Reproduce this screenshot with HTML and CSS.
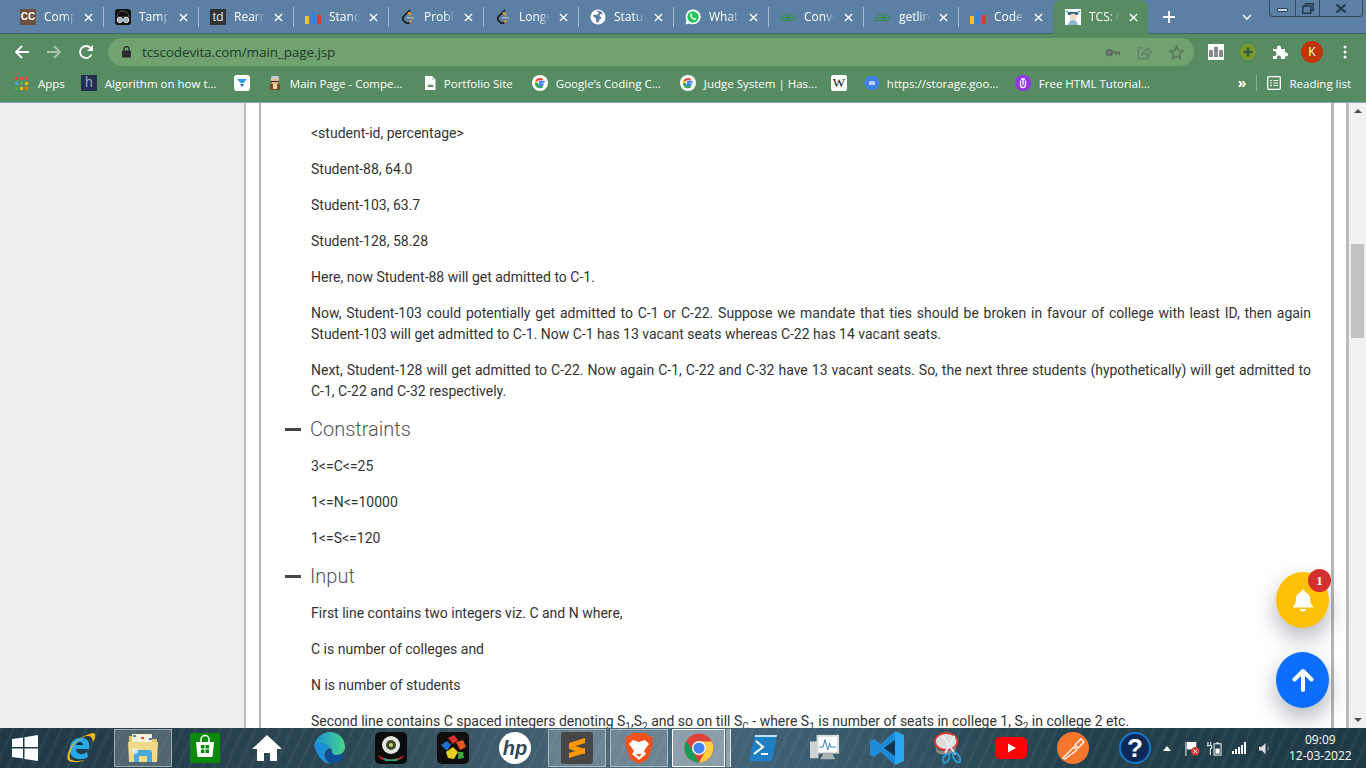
FILE: index.html
```html
<!DOCTYPE html>
<html lang="en">
<head>
	<meta charset="UTF-8">
	<title>TCS: CodeVita</title>
	<link rel="stylesheet" href="styles.css">
</head>
<body>
<svg class="defs" width="0" height="0">
	<defs>
		<linearGradient id="edge_dome" x1="0" y1="0" x2="1" y2="0"><stop offset="0" stop-color="#1b8fd8"/><stop offset="1" stop-color="#45d68a"/></linearGradient>
	</defs>
	<symbol id="x" viewBox="0 0 10 10"><path d="M1 1l8 8M9 1l-8 8" stroke="#fff" stroke-width="1.5" fill="none"/></symbol>
	<symbol id="bars" viewBox="0 0 16 16"><rect x="0" y="7" width="4" height="8" fill="#f6c02c"/><rect x="6" y="2" width="4" height="13" rx="1" fill="#3f7fd0"/><rect x="12" y="6" width="4" height="9" fill="#d23f31"/></symbol>
	<symbol id="leet" viewBox="0 0 16 16"><path d="M10 1L3.500 7.500Q2 9.500 3.500 11.500L5.500 13.500Q7.500 15 9.500 13.500" stroke="#1c1c1c" stroke-width="1.700" fill="none"/><path d="M9.500 13.500L11.500 11.500M8 3.500L11 6" stroke="#f0a020" stroke-width="1.700" fill="none"/><path d="M7 8.700h7" stroke="#b0b0b0" stroke-width="1.500"/></symbol>
	<symbol id="gfg" viewBox="0 0 16 16"><path d="M0 8.500h16M2 5.500Q7 4.500 8 8.500Q7 12 3.500 11.500Q1 11 1 8.500M14 5.500Q9 4.500 8 8.500Q9 12 12.500 11.500Q15 11 15 8.500" stroke="#2f8d46" stroke-width="1.100" fill="none"/></symbol>
	<symbol id="g" viewBox="0 0 16 16"><circle cx="8" cy="8" r="8" fill="#fff"/><path d="M12.700 6.800H8v2.400h2.700Q10.200 11 8 11Q5.200 10.800 5 8" fill="none" stroke="#4285f4" stroke-width="2"/><path d="M5 8Q5 9.700 6.200 10.500L4.500 12.200Q2.800 10.500 2.800 8z" fill="#34a853"/><path d="M4.500 12.200L6.200 10.500Q8 11.600 10 10.500L11.500 12Q8 14.500 4.500 12.200z" fill="#34a853"/><path d="M2.800 8Q2.800 6.500 3.600 5.300L5.500 6.700Q5 7.300 5 8z" fill="#fbbc05"/><path d="M3.600 5.300Q5 3 8 3Q10 3 11.300 4.200L9.700 5.700Q7 4 5.500 6.700z" fill="#ea4335"/></symbol>
</svg>

<div class="tabstrip">
	<div class="tab"><span class="fav fav_cc">CC</span><span class="tab_title">Comp</span><svg class="tab_x"><use href="#x"/></svg></div>
	<div class="tab"><svg class="fav" viewBox="0 0 16 16"><rect width="16" height="16" rx="3" fill="#111"/><path d="M2 8Q3 2 8 2Q13 2 14 8z" fill="#111" stroke="#555"/><circle cx="4.800" cy="11" r="2.700" fill="#9fb2bf" stroke="#ddd"/><circle cx="11.200" cy="11" r="2.700" fill="#9fb2bf" stroke="#ddd"/></svg><span class="tab_title">Tamp</span><svg class="tab_x"><use href="#x"/></svg></div>
	<div class="tab"><span class="fav fav_td">td</span><span class="tab_title">Rearr</span><svg class="tab_x"><use href="#x"/></svg></div>
	<div class="tab"><svg class="fav"><use href="#bars"/></svg><span class="tab_title">Stand</span><svg class="tab_x"><use href="#x"/></svg></div>
	<div class="tab"><svg class="fav"><use href="#leet"/></svg><span class="tab_title">Proble</span><svg class="tab_x"><use href="#x"/></svg></div>
	<div class="tab"><svg class="fav"><use href="#leet"/></svg><span class="tab_title">Longe</span><svg class="tab_x"><use href="#x"/></svg></div>
	<div class="tab"><svg class="fav" viewBox="0 0 16 16"><circle cx="8" cy="8" r="7.500" fill="#fff"/><path d="M6 1.500L9 4 7 6 4 5.500 3 7 6 9.500 6 12 8 14 9.500 10.500 12 9 9.500 7 10.500 5 13 5.500 11.500 2.500z" fill="#5b80a3"/></svg><span class="tab_title">Status</span><svg class="tab_x"><use href="#x"/></svg></div>
	<div class="tab"><svg class="fav" viewBox="0 0 16 16"><path d="M0.500 15.500L1.600 11.500A7.500 7.500 0 1 1 4.500 14.400z" fill="#fff"/><circle cx="8" cy="8" r="5.700" fill="#25c35a"/><path d="M5.500 4.500Q4.500 7 6.500 9.200Q9 11.800 11.300 10.500L10 8.800L8.800 9.500Q7.500 8.800 6.800 7.300L7.500 6.300L6.500 4.500z" fill="#fff"/></svg><span class="tab_title">What</span><svg class="tab_x"><use href="#x"/></svg></div>
	<div class="tab"><svg class="fav"><use href="#gfg"/></svg><span class="tab_title">Conve</span><svg class="tab_x"><use href="#x"/></svg></div>
	<div class="tab"><svg class="fav"><use href="#gfg"/></svg><span class="tab_title">getlin</span><svg class="tab_x"><use href="#x"/></svg></div>
	<div class="tab"><svg class="fav"><use href="#bars"/></svg><span class="tab_title">Codef</span><svg class="tab_x"><use href="#x"/></svg></div>
	<div class="tab tab_active"><svg class="fav" viewBox="0 0 16 16"><rect width="16" height="16" fill="#fff"/><path d="M3 3h10v3H3z" fill="#2d5f8a"/><circle cx="8" cy="8" r="3.500" fill="#f0d9c0"/><path d="M3 16Q4 11 8 11Q12 11 13 16z" fill="#8fb8d0"/><path d="M1 2l3 2M15 2l-3 2" stroke="#3a7" stroke-width="1.500"/></svg><span class="tab_title">TCS: C</span><svg class="tab_x"><use href="#x"/></svg></div>
	<svg class="new_tab" viewBox="0 0 12 12"><path d="M6 0v12M0 6h12" stroke="#fff" stroke-width="1.800"/></svg>
	<svg class="tab_menu" viewBox="0 0 10 6"><path d="M1 1l4 4 4-4" stroke="#fff" stroke-width="1.400" fill="none"/></svg>
	<div class="win_btns">
		<span class="win_btn win_min"><i></i></span>
		<span class="win_btn win_max"><svg viewBox="0 0 12 11" width="12" height="11"><path d="M3.500 2.500V.8h7.700v6.700H9M.8 3h8v7.200h-8z" stroke="#263a4c" stroke-width="1.500" fill="none"/></svg></span>
		<span class="win_btn win_close"><svg viewBox="0 0 12 9" width="12" height="9"><path d="M1.500.5l9 8M10.500.5l-9 8" stroke="#263a4c" stroke-width="2.200" fill="none"/></svg></span>
	</div>
</div>

<div class="toolbar">
	<svg class="nav_ico" viewBox="0 0 16 16"><path d="M15 8H2M8 2L2 8l6 6" stroke="#fff" stroke-width="1.800" fill="none"/></svg>
	<svg class="nav_ico nav_off" viewBox="0 0 16 16"><path d="M1 8h13M8 2l6 6-6 6" stroke="#a9c6ad" stroke-width="1.800" fill="none"/></svg>
	<svg class="nav_ico" viewBox="0 0 16 16"><path d="M13.500 10.500A6 6 0 1 1 12.500 4L14 5.500" stroke="#fff" stroke-width="1.800" fill="none"/><path d="M15 1v6H9z" fill="#fff"/></svg>
	<div class="omnibox">
		<svg class="lock" viewBox="0 0 10 12"><rect y="4.500" width="9" height="7" rx="1" fill="#2d2d2d"/><path d="M2 5V3a2.500 2.500 0 0 1 5 0v2" stroke="#2d2d2d" stroke-width="1.300" fill="none"/></svg>
		<span class="url">tcscodevita.com/main_page.jsp</span>
		<svg class="omni_ico" viewBox="0 0 16 16"><circle cx="4.500" cy="8" r="3" fill="#5f6f5f" stroke="#5f6f5f" stroke-width="2"/><circle cx="4.500" cy="8" r="1" fill="#70a370"/><path d="M7 8h8.500v3M12 8v2.500" stroke="#5f6f5f" stroke-width="2" fill="none"/></svg>
		<svg class="omni_ico" viewBox="0 0 16 16"><path d="M7 3H1.500v11.500H12V10" fill="none" stroke="#5f7f66" stroke-width="1.200"/><path d="M5 11Q5.500 6 10.500 6V3l5 4.500-5 4.500V9Q7 9 5 11z" fill="none" stroke="#5f7f66" stroke-width="1.200"/></svg>
		<svg class="omni_ico" viewBox="0 0 16 16"><path d="M8 1.500l2 4.500 4.800.5-3.600 3.200 1 4.800L8 12l-4.200 2.500 1-4.800L1.200 6.500 6 6z" fill="none" stroke="#5f6f5f" stroke-width="1.500"/></svg>
	</div>
	<div class="ext ext_stats"><i></i><i></i><i></i></div>
	<svg class="ext_ico" viewBox="0 0 16 16"><circle cx="8" cy="8" r="8" fill="#7b9a28"/><path d="M8 3.500v9M3.500 8h9" stroke="#375c46" stroke-width="2.600"/></svg>
	<svg class="ext_ico" viewBox="0 0 16 16"><path d="M1 5h4V3.500a2 2 0 0 1 4 0V5h4v3.500h1a2 2 0 0 1 0 4h-1V15H9v-1.500a2 2 0 0 0-4 0V15H1v-3h1a2.500 2.500 0 0 0 0-5H1z" fill="#fff"/></svg>
	<span class="avatar">K</span>
	<svg class="menu_dots" viewBox="0 0 4 14"><circle cx="2" cy="2" r="1.500" fill="#fff"/><circle cx="2" cy="7" r="1.500" fill="#fff"/><circle cx="2" cy="12" r="1.500" fill="#fff"/></svg>
</div>

<div class="bookmarks">
	<a class="bm bm_apps"><svg class="fav_sm" viewBox="0 0 13 13"><rect width="3" height="3" fill="#e8453c"/><rect x="5" width="3" height="3" fill="#e8453c"/><rect x="10" width="3" height="3" fill="#e8453c"/><rect y="5" width="3" height="3" fill="#4da3e0"/><rect x="5" y="5" width="3" height="3" fill="#4caf50"/><rect x="10" y="5" width="3" height="3" fill="#fbbc05"/><rect y="10" width="3" height="3" fill="#4caf50"/><rect x="5" y="10" width="3" height="3" fill="#fbbc05"/><rect x="10" y="10" width="3" height="3" fill="#f57c00"/></svg><span class="bm_text">Apps</span></a>
	<a class="bm"><span class="fav fav_h">h</span><span class="bm_text w113">Algorithm on how t...</span></a>
	<a class="bm bm_icon"><svg class="fav" viewBox="0 0 16 16"><rect width="16" height="16" rx="3" fill="#fff"/><path d="M3 4h10L9.500 8H6.500z" fill="#2f9be8"/><path d="M6 9h4l-2 3z" fill="#1565c0"/></svg></a>
	<a class="bm"><svg class="fav" viewBox="0 0 16 16"><rect x="4" y="1" width="8" height="6" rx="2" fill="#ccc"/><rect x="5" y="4" width="6" height="5" fill="#e3b48c"/><rect x="3" y="9" width="10" height="6" fill="#7a4a26"/><rect x="6" y="9" width="4" height="5" fill="#e8d7a5"/><rect x="4" y="6" width="8" height="1" fill="#333"/></svg><span class="bm_text w116">Main Page - Compe...</span></a>
	<a class="bm"><svg class="fav" viewBox="0 0 16 16"><path d="M3 1h7l3.500 3.500V15H3z" fill="#fff"/><path d="M5 12l2-3 1.500 1.500L10 9l2 3z" fill="#578b66"/><path d="M10 1v4h3.500" fill="#cfd8cf"/></svg><span class="bm_text w68">Portfolio Site</span></a>
	<a class="bm"><svg class="fav"><use href="#g"/></svg><span class="bm_text w108">Google’s Coding C...</span></a>
	<a class="bm"><svg class="fav"><use href="#g"/></svg><span class="bm_text w111">Judge System | Has...</span></a>
	<a class="bm bm_icon"><span class="fav fav_w">W</span></a>
	<a class="bm"><svg class="fav" viewBox="0 0 16 16"><path d="M4 1h8l4 7-4 7H4L0 8z" fill="#3f7fe8"/><rect x="5" y="6" width="6" height="4" fill="#b8d0fa"/></svg><span class="bm_text w112">https://storage.goo...</span></a>
	<a class="bm"><svg class="fav" viewBox="0 0 16 16"><circle cx="8" cy="8" r="8" fill="#9333ea"/><path d="M5.500 5.500V10a2.500 2.500 0 0 0 5 0V5.500M8 4v6M6 4h4" stroke="#fff" stroke-width="1.300" fill="none"/></svg><span class="bm_text w108">Free HTML Tutorial...</span></a>
	<span class="bm_more">»</span>
	<span class="bm_sep"></span>
	<a class="bm bm_read"><svg class="fav_read" viewBox="0 0 14 14"><rect x=".7" y=".7" width="12.600" height="12.600" rx="1" fill="none" stroke="#fff" stroke-width="1.300"/><path d="M3 4.500h2M6.500 4.500H11M3 7h2M6.500 7H11M3 9.500h2M6.500 9.500H11" stroke="#fff" stroke-width="1.200"/></svg><span class="bm_text">Reading list</span></a>
</div>

<div class="viewport">
	<div class="side"></div>
	<div class="page">
		<div class="card">
			<p>&lt;student-id, percentage&gt;</p>
			<p>Student-88, 64.0</p>
			<p>Student-103, 63.7</p>
			<p>Student-128, 58.28</p>
			<p>Here, now Student-88 will get admitted to C-1.</p>
			<p>Now, Student-103 could potentially get admitted to C-1 or C-22. Suppose we mandate that ties should be broken in favour of college with least ID, then again Student-103 will get admitted to C-1. Now C-1 has 13 vacant seats whereas C-22 has 14 vacant seats.</p>
			<p>Next, Student-128 will get admitted to C-22. Now again C-1, C-22 and C-32 have 13 vacant seats. So, the next three students (hypothetically) will get admitted to C-1, C-22 and C-32 respectively.</p>
			<h2 class="section"><span class="dash"></span>Constraints</h2>
			<p>3&lt;=C&lt;=25</p>
			<p>1&lt;=N&lt;=10000</p>
			<p>1&lt;=S&lt;=120</p>
			<h2 class="section"><span class="dash"></span>Input</h2>
			<p>First line contains two integers viz. C and N where,</p>
			<p>C is number of colleges and</p>
			<p>N is number of students</p>
			<p>Second line contains C spaced integers denoting S<sub>1</sub>,S<sub>2</sub> and so on till S<sub>C</sub> - where S<sub>1</sub> is number of seats in college 1, S<sub>2</sub> in college 2 etc.</p>
		</div>
	</div>
	<div class="scrollbar">
		<span class="arrow_up"></span>
		<span class="thumb"></span>
		<span class="arrow_down"></span>
	</div>
	<div class="fab fab_bell">
		<svg viewBox="0 0 22 24" width="22" height="24"><path d="M11 1.500a1.800 1.800 0 0 1 1.800 1.800v.7Q18 5.500 18 11q0 5 3 7.500v1H1v-1Q4 16 4 11q0-5.500 5.200-7v-.7A1.800 1.800 0 0 1 11 1.500z" fill="#fff"/><path d="M8 21h6a3 2.500 0 0 1-6 0z" fill="#fff"/></svg>
		<span class="badge">1</span>
	</div>
	<div class="fab fab_up">
		<svg viewBox="0 0 22 24" width="22" height="24"><path d="M11 22V3M2.500 11.500L11 3l8.500 8.500" stroke="#fff" stroke-width="4" stroke-linecap="round" stroke-linejoin="round" fill="none"/></svg>
	</div>
</div>

<div class="taskbar">
	<div class="start"><svg viewBox="0 0 26 26" width="26" height="26"><path d="M0 4l11-1.600V12H0zM12.500 2.200L26 0v12H12.500zM0 13.500h11v10L0 22zM12.500 13.500H26V26l-13.500-2z" fill="#fff"/></svg></div>
	<div class="slot"><svg viewBox="0 0 32 32" width="32" height="32"><path d="M5 20C3 10 11 5 18 6c5 1 7 5 6 11H11c0 5 6 7 11 3l1 5c-7 4-17 2-18-5z" fill="#29a8e8"/><path d="M11 13h7c0-4-6-4-7 0z" fill="#0b2b3e"/><path d="M3 28C0 20 10 5 28 1c3 0 3 4 0 9-1-6-3-6-7-6C12 7 3 18 5 27c4 3 10 2 14 1-5 3-13 3-16 0z" fill="#f5b81c"/></svg></div>
	<div class="slot slot_on"><svg viewBox="0 0 32 32" width="32" height="32"><path d="M2 4h10l2 3h16v8H2z" fill="#e8c766"/><rect x="5" y="2" width="20" height="8" fill="#f4efd8"/><rect x="6" y="3" width="3" height="2" fill="#3aa655"/><rect x="14" y="5" width="3" height="2" fill="#d94f3d"/><rect x="22" y="6" width="3" height="2" fill="#3a80d0"/><path d="M1 10h30l-1 20H2z" fill="#f2d98a"/><path d="M7 30v-9q0-3 3-3h12q3 0 3 3v9h-5v-6h-8v6z" fill="#4aa8dc"/><circle cx="8" cy="19" r="3" fill="#dff4ff" opacity=".8"/></svg></div>
	<div class="slot"><svg viewBox="0 0 30 30" width="30" height="30"><rect width="30" height="30" fill="#0a8a0a"/><path d="M6 9h18l-1.500 15h-15z" fill="#fff"/><path d="M11 9V6.500a4 4 0 0 1 8 0V9" stroke="#fff" stroke-width="1.500" fill="none"/><path d="M11 12h3.500v3.500H11zM15.500 12H19v3.500h-3.500zM11 16.500h3.500V20H11zM15.500 16.500H19V20h-3.500z" fill="#0a8a0a"/></svg></div>
	<div class="slot"><svg viewBox="0 0 32 30" width="32" height="30"><path d="M16 2L1 16h5v12h7v-8h6v8h7V16h5z" fill="#fff"/></svg></div>
	<div class="slot"><svg viewBox="0 0 32 32" width="32" height="32"><path d="M1 13C4 25 11 32 18 32c-6-3-8-9-5-13 2-3 4-3 6-1-3-6-12-8-18-5z" fill="#1a90dc"/><path d="M1 14C3 5 10 0 17 0c9 0 15 7 15 15 0 5-4 8-9 8-4 0-5-2-4-5-3-6-13-9-18-4z" fill="url(#edge_dome)"/><path d="M19 18c-4 0-7 3-6 7 1 4 5 7 9 6 5-1 9-6 10-12-1 3-5 5-9 4.500-3-.5-4.500-2.500-4-5.500z" fill="#0c4f9a"/></svg></div>
	<div class="slot"><svg viewBox="0 0 32 32" width="32" height="32"><rect width="32" height="32" rx="5" fill="#0c0c0c"/><ellipse cx="16" cy="13" rx="9" ry="9" fill="#e6e6e0"/><circle cx="16" cy="13" r="5" fill="#3c4a28"/><circle cx="16" cy="13" r="2" fill="#c6d65a"/><path d="M3 23q13 9 26 0-2 6-13 6T3 23z" fill="#d23"/><path d="M9 26q7 3 14 0l-1 3H10z" fill="#2a8"/></svg></div>
	<div class="slot"><svg viewBox="0 0 32 32" width="32" height="32"><rect width="32" height="32" rx="5" fill="#0f0f0f"/><path d="M4 13l6-4 4 4-4 6z" fill="#1f6fd0"/><path d="M11 6l6-3 4 5-5 4z" fill="#d8322a"/><path d="M19 10l7-2 3 7-6 3z" fill="#e4571e"/><path d="M9 20l7-5 5 5-4 7-6-1z" fill="#e6cf20"/><path d="M21 20l5 0 1 6-6 1z" fill="#3aa640"/></svg></div>
	<div class="slot"><span class="hp"><span class="hp_text">hp</span></span></div>
	<div class="slot slot_on"><svg viewBox="0 0 32 32" width="32" height="32"><rect width="32" height="32" rx="3" fill="#474747"/><path d="M8 11L24 6v5L8 16zM8 12l16 5v5L8 17zM8 21l16-5v5L8 26z" fill="#ff9800"/></svg></div>
	<div class="slot slot_on"><svg viewBox="0 0 30 32" width="30" height="32"><path d="M8 1h14l3 3 4 1-1 4 1 3-5 15-9 5-9-5L1 12l1-3-1-4 4-1z" fill="#f1511b"/><path d="M9 8l6 2 6-2 4 4-3 4-2 3 2 3-7 6-7-6 2-3-2-3-3-4z" fill="#fff"/><path d="M12 22h6l-3 3z" fill="#f1511b"/></svg></div>
	<div class="slot slot_on slot_sel"><svg viewBox="0 0 32 32" width="30" height="30"><circle cx="16" cy="16" r="15.500" fill="#db4437"/><path d="M16 31.500A15.500 15.500 0 0 1 2.600 8.300L10 21l6 10.500z" fill="#0f9d58"/><path d="M16 31.500l7.500-13L16 9h13.700A15.500 15.500 0 0 1 16 31.500z" fill="#ffcd40"/><circle cx="16" cy="16" r="7.500" fill="#fff"/><circle cx="16" cy="16" r="6" fill="#4285f4"/></svg></div>
	<div class="slot"><svg viewBox="0 0 28 26" width="28" height="26"><path d="M6 0h22l-5 26H0z" fill="#1f7fc4"/><path d="M6 0h22l-.5 2H5.600z" fill="#bfe1f6"/><path d="M7 6l7 6-9 7M12 19h7" stroke="#fff" stroke-width="2" fill="none"/></svg></div>
	<div class="slot"><svg viewBox="0 0 32 30" width="30" height="30"><rect x="0" y="8" width="9" height="18" fill="#ccd3d0"/><rect x="7" y="1" width="24" height="20" fill="#d5dcda"/><rect x="9" y="3" width="20" height="16" fill="#fff"/><path d="M10 14h4l2-8 3 11 2-7 1 4h6" stroke="#2b7fc0" fill="none"/><path d="M14 21h10l3 6H11z" fill="#aab3b0"/></svg></div>
	<div class="slot"><svg viewBox="0 0 34 34" width="34" height="34"><path d="M25 0l9 4v26l-9 4-14-13-7 5-4-2V10l4-2 7 5z" fill="#1f8ad8"/><path d="M25 9L14 17l11 8z" fill="#11344e"/><path d="M25 0l9 4v26l-9 4z" fill="#2aa4ef"/></svg></div>
	<div class="slot"><svg viewBox="0 0 32 34" width="30" height="32"><ellipse cx="13" cy="10" rx="12" ry="9" fill="#ddd" stroke="#d33" stroke-width="2"/><path d="M2 14q0 7 11 6 9-1 10-6v5q-2 5-11 5-9 0-10-5z" fill="#8b8b8b"/><path d="M9 4l14 20M22 4L12 22" stroke="#eee" stroke-width="2"/><ellipse cx="24" cy="27" rx="3" ry="6" fill="none" stroke="#29a0dc" stroke-width="2" transform="rotate(-30 24 27)"/><ellipse cx="13" cy="28" rx="3" ry="5" fill="none" stroke="#29a0dc" stroke-width="2" transform="rotate(30 13 28)"/></svg></div>
	<div class="slot"><svg viewBox="0 0 32 22" width="32" height="22"><rect width="32" height="22" rx="5" fill="#f00"/><path d="M13 6.500l8 4.500-8 4.500z" fill="#fff"/></svg></div>
	<div class="slot"><svg viewBox="0 0 32 32" width="32" height="32"><circle cx="16" cy="16" r="16" fill="#f4762d"/><path d="M6 26L17 15l3 3L8 27zM18 13l6-6 3 3-6 6z" fill="none" stroke="#fff" stroke-width="1.300"/></svg></div>
	<div class="slot"><span class="help">?</span></div>
	<div class="tray">
		<svg class="tray_up" viewBox="0 0 8 5"><path d="M0 5l4-5 4 5z" fill="#fff"/></svg>
		<svg class="tray_ico tray_flag" viewBox="0 0 16 16"><path d="M1 1v15" stroke="#fff"/><path d="M2 1h10v8H2z" fill="#fff"/><circle cx="11" cy="11" r="4.500" fill="#e03a3a"/><path d="M9 9l4 4M13 9l-4 4" stroke="#fff"/></svg>
		<svg class="tray_ico" viewBox="0 0 16 16"><path d="M1 1v4M4 1v4M0 5h5v3H3.500v7" stroke="#fff" fill="none"/><rect x="7.500" y="3" width="7.500" height="12" fill="none" stroke="#fff"/><rect x="10" y="1.500" width="2.500" height="1.500" fill="#fff"/><rect x="9" y="8" width="4.500" height="5.500" fill="#fff"/></svg>
		<div class="signal"><i></i><i></i><i></i><i></i><i></i></div>
		<svg class="tray_ico" viewBox="0 0 16 16"><path d="M1 6h3l4-4v12l-4-4H1z" fill="#ddd"/><path d="M10.500 6q1.500 2 0 4" stroke="#999" fill="none"/></svg>
		<div class="clock"><span>09:09</span><span>12-03-2022</span></div>
	</div>
</div>
</body>
</html>
```

FILE: styles.css
```css
* {
	box-sizing: border-box;
}
html, body {
	height: 100%;
}
body {
	margin: 0;
	height: 768px;
	overflow: hidden;
	display: flex;
	flex-direction: column;
	font-family: Roboto, sans-serif;
	background: #fff;
}
.defs {
	position: absolute;
}

/* tabs */
.tabstrip {
	height: 34px;
	flex: none;
	display: flex;
	padding-left: 8px;
	background: #5b80a3;
	border-bottom: 1px solid #43607a;
	font-family: "Open Sans", sans-serif;
	font-size: 12px;
	color: #fff;
}
.tab {
	width: 95px;
	height: 33px;
	padding: 9px 0 0 12px;
	display: flex;
	position: relative;
}
.tab::after {
	content: "";
	position: absolute;
	right: -1px;
	top: 7px;
	width: 1px;
	height: 20px;
	background: #a5bbcd;
}
.tab_active {
	background: #578b62;
	border-radius: 8px 8px 0 0;
	height: 34px;
}
.tab_active::after {
	display: none;
}
.tab:nth-child(11)::after {
	display: none;
}
.fav {
	width: 16px;
	height: 16px;
	flex: none;
	display: block;
}
.fav_cc {
	background: #6d4f3c;
	color: #fff;
	font: bold 10px/16px "Liberation Sans", sans-serif;
	text-align: center;
}
.fav_td {
	background: #333;
	color: #ddd;
	font: 13px/15px "Liberation Sans", sans-serif;
	text-align: center;
}
.fav_h {
	background: #232f52;
	color: #9aa5b8;
	font: 14px/15px "Liberation Sans", sans-serif;
	text-align: center;
}
.fav_w {
	background: #fff;
	color: #111;
	font: 13px/16px "Liberation Serif", serif;
	text-align: center;
	border-radius: 2px;
}
.tab_title {
	width: 31px;
	margin-left: 8px;
	line-height: 16px;
	white-space: nowrap;
	overflow: hidden;
	-webkit-mask-image: linear-gradient(to right, #000 65%, transparent);
	mask-image: linear-gradient(to right, #000 65%, transparent);
}
.tab_x {
	width: 9px;
	height: 9px;
	margin: 4px 0 0 9px;
}
.new_tab {
	width: 12px;
	height: 12px;
	margin: 11px 0 0 15px;
}
.tab_menu {
	width: 10px;
	height: 6px;
	margin: 14px 0 0 67px;
}
.win_btns {
	position: absolute;
	top: 0;
	left: 1269px;
	width: 94px;
	height: 17px;
	display: flex;
	border: 1px solid #33495c;
	border-top: none;
	border-radius: 0 0 4px 4px;
}
.win_btn {
	display: flex;
	align-items: center;
	justify-content: center;
	border-right: 1px solid #33495c;
	width: 24px;
}
.win_min {
	width: 26px;
}
.win_close {
	border-right: none;
	flex: 1;
}
.win_min i {
	display: block;
	width: 11px;
	height: 4px;
	margin-top: 4px;
	border: 1px solid #2c4256;
	background: #c9d6e0;
	border-radius: 1px;
}

/* toolbar */
.toolbar {
	height: 35px;
	flex: none;
	display: flex;
	align-items: center;
	padding: 1px 0 0 14px;
	background: #578b62;
}
.nav_ico {
	width: 16px;
	height: 16px;
	margin-right: 16px;
}
.omnibox {
	width: 1086px;
	height: 28px;
	flex: none;
	margin-left: -2px;
	border-radius: 14px;
	background: #70a370;
	display: flex;
	align-items: center;
	padding-left: 14px;
}
.lock {
	width: 10px;
	height: 12px;
	flex: none;
}
.url {
	margin-left: 10px;
	font: 13.500px "Open Sans", sans-serif;
	color: #263a2b;
	width: 966px;
	flex: none;
	white-space: nowrap;
	letter-spacing: -.1px;
}
.omni_ico {
	width: 15px;
	height: 15px;
	flex: none;
	margin-left: -3px;
	margin-right: 20px;
}
.ext {
	flex: none;
}
.ext_stats {
	width: 16px;
	height: 16px;
	margin-left: 14px;
	background: #fff;
	display: flex;
	align-items: flex-end;
	justify-content: center;
	gap: 1px;
	padding-bottom: 3px;
}
.ext_stats i {
	width: 4px;
	height: 7px;
	background: #888;
}
.ext_stats i:nth-child(2) {
	height: 10px;
}
.ext_ico {
	width: 16px;
	height: 16px;
	margin-left: 16px;
	flex: none;
}
.avatar {
	width: 22px;
	height: 22px;
	margin-left: 13px;
	border-radius: 50%;
	background: #bf360c;
	color: #fff;
	font: 12px/22px "Open Sans", sans-serif;
	text-align: center;
	flex: none;
}
.menu_dots {
	width: 4px;
	height: 14px;
	margin-left: 20px;
	flex: none;
}

/* bookmarks */
.bookmarks {
	height: 34px;
	flex: none;
	display: flex;
	align-items: center;
	padding: 0 0 5px 15px;
	background: #578b62;
	border-bottom: 1px solid #7fa7c4;
	font-family: "Open Sans", sans-serif;
	font-size: 11.500px;
	color: #fff;
	white-space: nowrap;
}
.bm {
	display: flex;
	align-items: center;
	margin-right: 16px;
}
.bm_icon {
	margin-right: 17px;
}
.bm_text {
	margin-left: 8px;
}
.fav_sm {
	width: 13px;
	height: 13px;
	margin-right: 2px;
}
.w113 {
	width: 113px;
}
.w112 {
	width: 112px;
	margin-left: 7px;
}
.w116 {
	width: 116px;
	margin-left: 7px;
}
.w68 {
	width: 68px;
	margin-left: 6px;
	margin-right: 4px;
}
.w108 {
	width: 108px;
}
.w111 {
	width: 111px;
}
.bm_more {
	margin-left: 75px;
	font-size: 14px;
	font-weight: bold;
	line-height: 14px;
}
.bm_sep {
	width: 1px;
	height: 16px;
	margin-left: 10px;
	background: #8fb39a;
}
.bm_read {
	margin: 0 0 0 10px;
}
.fav_read {
	width: 14px;
	height: 14px;
}

/* page */
.viewport {
	flex: 1;
	min-height: 0;
	display: flex;
	position: relative;
	overflow: hidden;
}
.side {
	width: 244px;
	flex: none;
	background: #eee;
}
.page {
	flex: 1;
	min-width: 0;
	padding: 0 12px 0 13px;
	background: #fff;
	border-left: 2px solid #bbb;
	border-right: 3px solid #bbb;
}
.card {
	height: 100%;
	overflow: hidden;
	padding: 20px 20px 0 50px;
	border-left: 2px solid #b5b5b5;
	border-right: 3px solid #b5b5b5;
	font-size: 14px;
	line-height: 21px;
	color: #333;
	text-align: justify;
}
.card p {
	margin: 0 0 15px;
}
.card sub {
	font-size: 10px;
	line-height: 0;
}
.section {
	margin: 0 0 15px -26px;
	height: 24px;
	display: flex;
	align-items: center;
	font-size: 20px;
	font-weight: 300;
	line-height: 24px;
	color: #555;
}
.dash {
	width: 16px;
	height: 3px;
	margin-right: 9px;
	background: #444;
}
.scrollbar {
	width: 17px;
	flex: none;
	position: relative;
	display: flex;
	flex-direction: column;
	align-items: center;
	background: #f1f1f1;
}
.arrow_up {
	margin-top: 6px;
	border: 4px solid transparent;
	border-top: none;
	border-bottom: 4px solid #505050;
}
.thumb {
	width: 13px;
	height: 94px;
	margin-top: 131px;
	background: #c1c1c1;
}
.arrow_down {
	margin-top: auto;
	margin-bottom: 6px;
	border: 4px solid transparent;
	border-bottom: none;
	border-top: 4px solid #505050;
}
.fab {
	position: absolute;
	left: 1276px;
	width: 53px;
	height: 56px;
	border-radius: 50%;
	display: flex;
	align-items: center;
	justify-content: center;
	box-shadow: 0 10px 22px rgba(60, 70, 85, .4);
}
.fab_bell {
	top: 469px;
	background: #ffc107;
}
.fab_up {
	top: 549px;
	background: #0d6efd;
}
.badge {
	position: absolute;
	top: -3px;
	right: -2px;
	width: 23px;
	height: 23px;
	border-radius: 50%;
	background: #d32f2f;
	color: #fff;
	font: bold 13px/23px "Liberation Serif", serif;
	text-align: center;
}

/* taskbar */
.taskbar {
	height: 40px;
	flex: none;
	display: flex;
	align-items: center;
	background:
		repeating-linear-gradient(115deg, rgba(255, 255, 255, .04) 0 3px, transparent 3px 11px),
		linear-gradient(90deg, #1f3a46 0, #2b4753 25%, #49687c 45%, #3e5f72 58%, #24424e 78%, #1e3a46 100%);
}
.start {
	width: 50px;
	flex: none;
	display: flex;
	padding-left: 12px;
}
.slot {
	width: 62px;
	height: 38px;
	flex: none;
	display: flex;
	align-items: center;
	justify-content: center;
}
.slot_on {
	width: 58px;
	margin: 0 2px;
	background: rgba(255, 255, 255, .2);
	border: 1px solid rgba(255, 255, 255, .45);
}
.slot_sel {
	width: 53px;
	margin: 0 7px 0 2px;
	background: rgba(255, 255, 255, .38);
	border: 1px solid #fff;
	position: relative;
}
.slot_sel::after {
	content: "";
	position: absolute;
	left: 53px;
	top: -1px;
	width: 4px;
	height: 38px;
	background: rgba(255, 255, 255, .4);
	border-right: 1px solid rgba(255, 255, 255, .7);
}
.hp {
	width: 32px;
	height: 32px;
	border-radius: 50%;
	background: #fff;
	display: flex;
	align-items: center;
	justify-content: center;
}
.hp_text {
	font: italic bold 20px/32px "Liberation Sans", sans-serif;
	color: #2d4a5a;
}
.help {
	width: 32px;
	height: 32px;
	border-radius: 50%;
	background: #0a2a5a;
	border: 2px solid #1c78c8;
	color: #fff;
	font: bold 26px/28px "Liberation Sans", sans-serif;
	text-align: center;
}
.tray {
	flex: 1;
	display: flex;
	align-items: center;
	margin-left: -3px;
}
.tray_up {
	width: 8px;
	height: 5px;
	margin-right: 14px;
}
.tray_ico {
	width: 15px;
	height: 15px;
	margin-right: 10px;
}
.tray_flag {
	margin-right: 7px;
}
.signal {
	display: flex;
	align-items: flex-end;
	gap: 1px;
	height: 12px;
	margin-right: 12px;
}
.signal i {
	width: 2px;
	height: 3px;
	background: #fff;
}
.signal i:nth-child(2) { height: 5px; }
.signal i:nth-child(3) { height: 7px; }
.signal i:nth-child(4) { height: 9px; }
.signal i:nth-child(5) { height: 12px; }
.clock {
	display: flex;
	flex-direction: column;
	align-items: center;
	margin-left: 6px;
	font: 12px/16px "Open Sans", sans-serif;
	color: #fff;
}
```
